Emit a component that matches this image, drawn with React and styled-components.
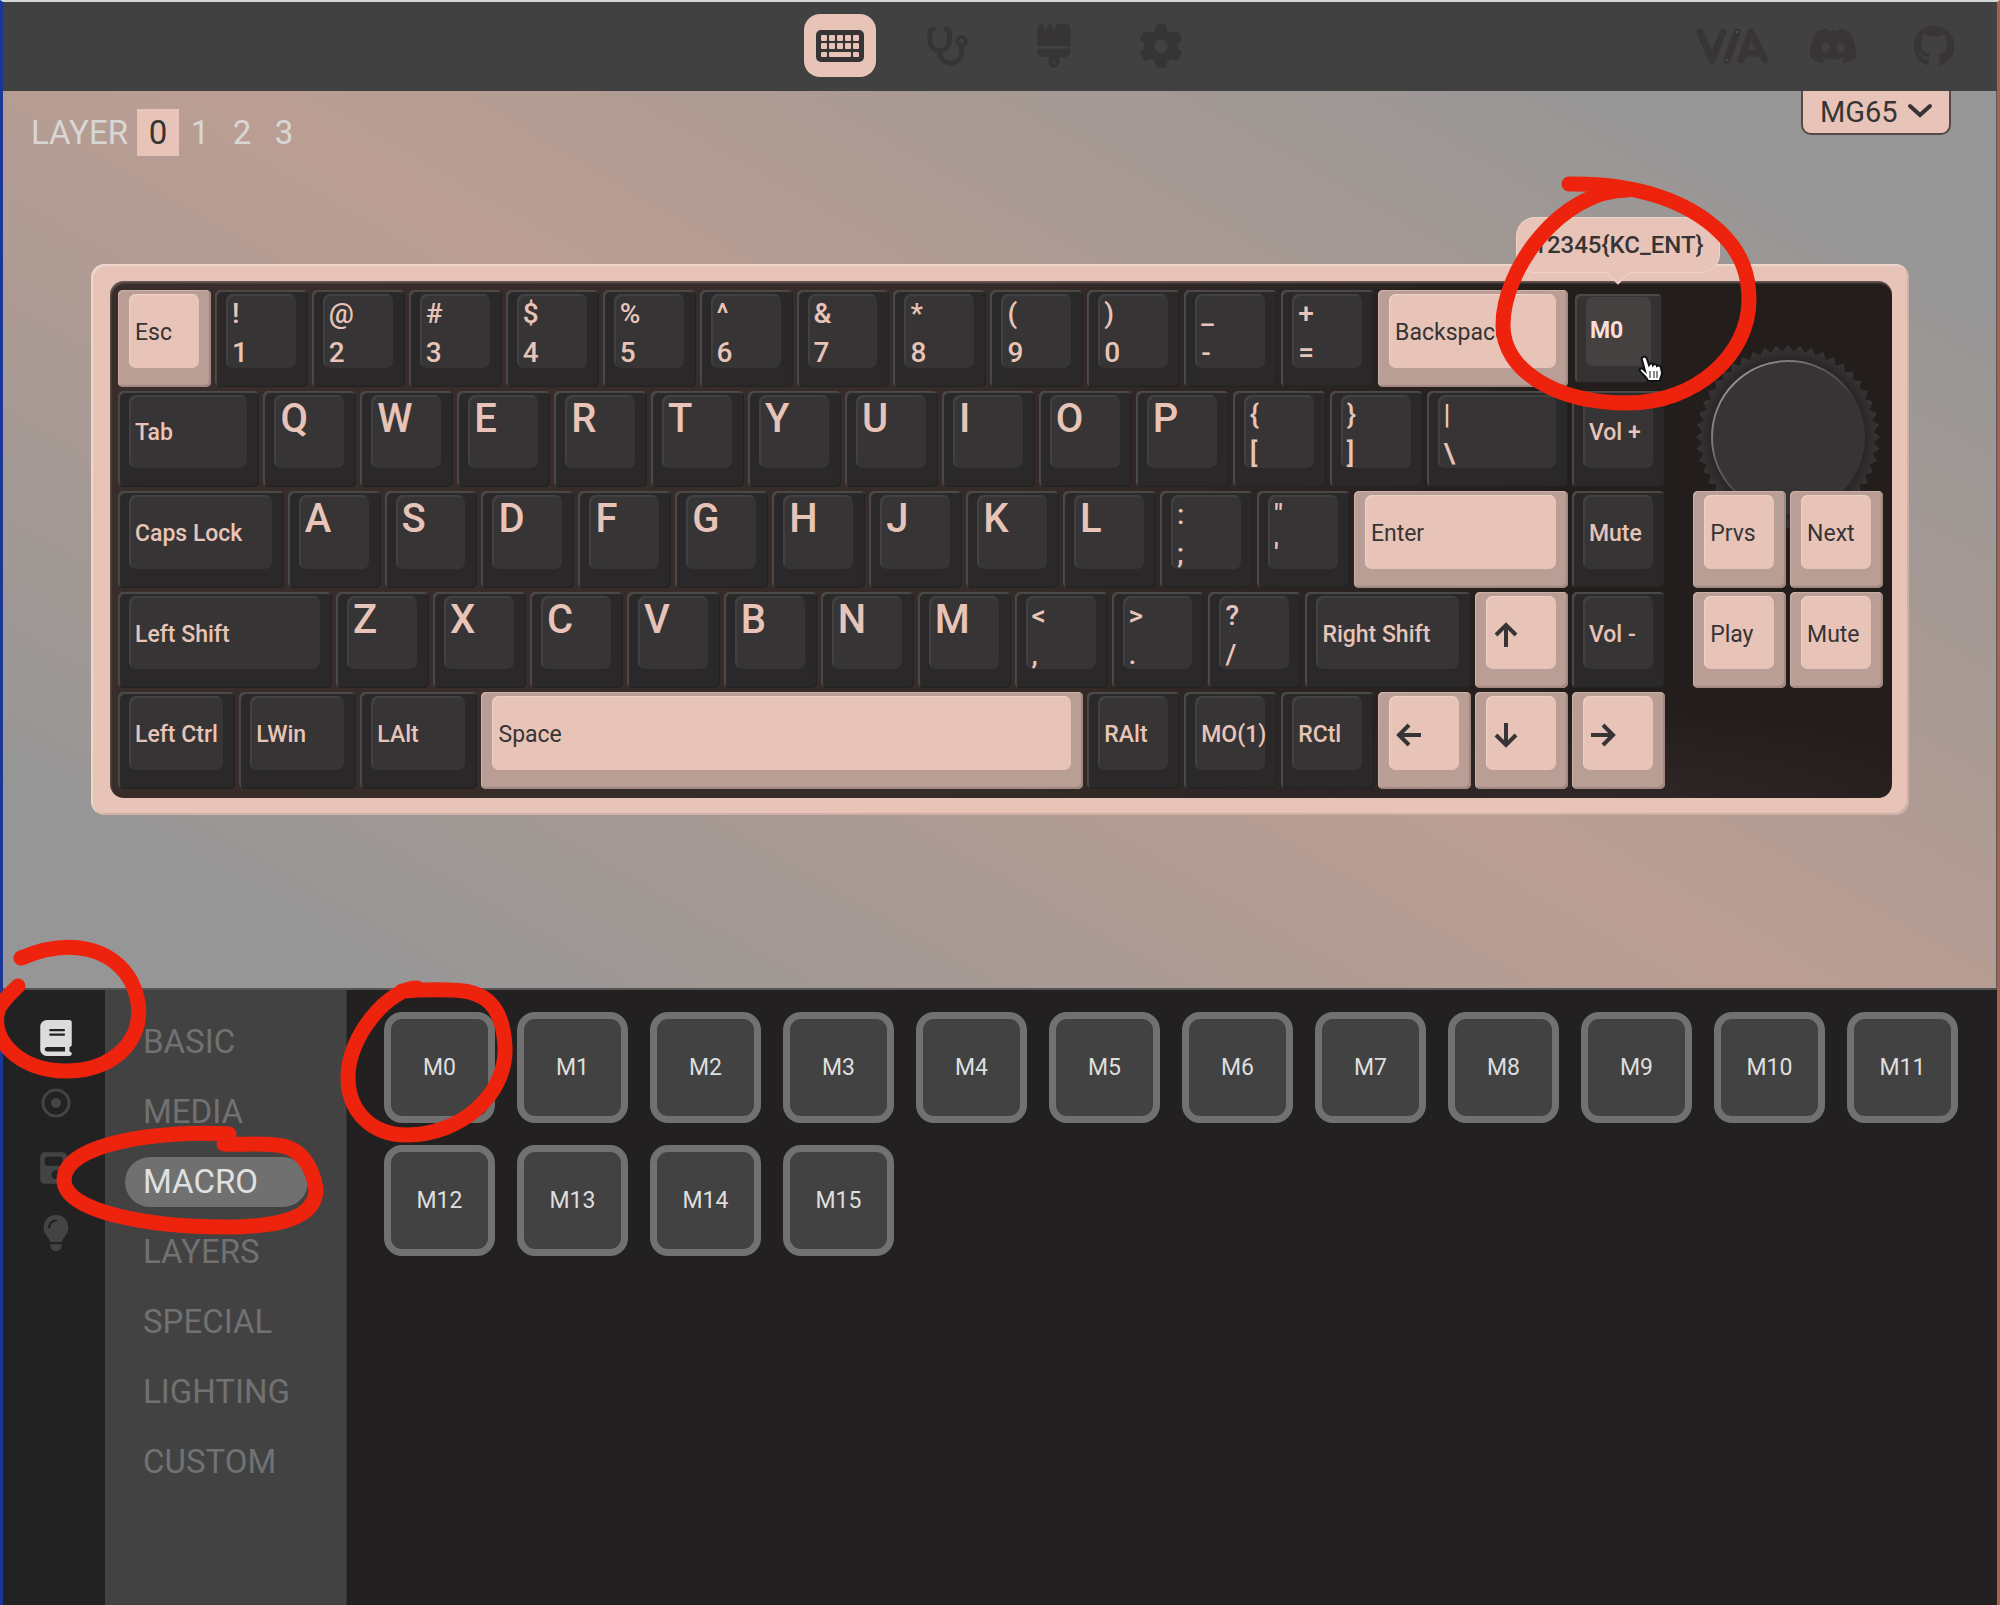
import React, { useState } from 'react';
import styled, { createGlobalStyle, css } from 'styled-components';
import {
  FaStethoscope,
  FaBrush,
  FaGear,
  FaDiscord,
  FaGithub,
  FaBook,
  FaFloppyDisk,
  FaLightbulb,
} from 'react-icons/fa6';

const accent = '#e8c4b8';
const accentSide = '#b99e95';
const ink = '#363434';

const layers = [0, 1, 2, 3];
const menu = ['BASIC', 'MEDIA', 'MACRO', 'LAYERS', 'SPECIAL', 'LIGHTING', 'CUSTOM'];
const macros = Array.from({ length: 16 }, (_, i) => `M${i}`);

// [legend, width in quarter units, tone]; two legends are stacked
const rows = [
  [
    ['Esc', 4, 'accent'],
    ...['!1', '@2', '#3', '$4', '%5', '^6', '&7', '*8', '(9', ')0', '_-', '+='].map((k) => [k.split(''), 4]),
    ['Backspace', 8, 'accent'],
    ['M0', 4, 'hover'],
  ],
  [
    ['Tab', 6],
    ...'QWERTYUIOP'.split('').map((k) => [k, 4]),
    [['{', '['], 4],
    [['}', ']'], 4],
    [['|', '\\'], 6],
    ['Vol +', 4],
  ],
  [
    ['Caps Lock', 7],
    ...'ASDFGHJKL'.split('').map((k) => [k, 4]),
    [[':', ';'], 4],
    [['"', "'"], 4],
    ['Enter', 9, 'accent'],
    ['Mute', 4],
    [null, 1],
    ['Prvs', 4, 'accent'],
    ['Next', 4, 'accent'],
  ],
  [
    ['Left Shift', 9],
    ...'ZXCVBNM'.split('').map((k) => [k, 4]),
    [['<', ','], 4],
    [['>', '.'], 4],
    [['?', '/'], 4],
    ['Right Shift', 7],
    ['up', 4, 'accent'],
    ['Vol -', 4],
    [null, 1],
    ['Play', 4, 'accent'],
    ['Mute', 4, 'accent'],
  ],
  [
    ['Left Ctrl', 5],
    ['LWin', 5],
    ['LAlt', 5],
    ['Space', 25, 'accent'],
    ['RAlt', 4],
    ['MO(1)', 4],
    ['RCtl', 4],
    ['left', 4, 'accent'],
    ['down', 4, 'accent'],
    ['right', 4, 'accent'],
  ],
];

const keys = rows.flatMap((row, r) => {
  let x = 1;
  return row
    .map(([legend, w, tone]) => {
      const key = { legend, w, tone, x, row: r + 1 };
      x += w;
      return key;
    })
    .filter((key) => key.legend !== null);
});

const turns = { up: 0, right: 90, down: 180, left: 270 };

const Arrow = ({ name }) => (
  <svg width='28' height='26' viewBox='0 0 28 26' role='img' aria-label={name}>
    <g transform={`rotate(${turns[name]} 14 13)`} fill='none' stroke={ink} strokeWidth='4'>
      <path d='M14 25V3M4 13L14 3l10 10' />
    </g>
  </svg>
);

const teeth = Array.from({ length: 96 }, (_, i) => {
  const r = i % 2 ? 86 : 92;
  const a = (i / 96) * Math.PI * 2;
  return `${(93 + r * Math.cos(a)).toFixed(1)},${(93 + r * Math.sin(a)).toFixed(1)}`;
}).join(' ');

const KnobDrawing = () => (
  <svg width='186' height='186' viewBox='0 0 186 186' aria-hidden='true'>
    <defs>
      <linearGradient id='rim' x1='0' y1='0' x2='1' y2='1'>
        <stop offset='0.1' stopColor='#9b9999' />
        <stop offset='0.6' stopColor='#363434' />
      </linearGradient>
      <radialGradient id='skirt'>
        <stop offset='0.82' stopColor='#262425' />
        <stop offset='0.98' stopColor='#363434' />
      </radialGradient>
    </defs>
    <polygon points={teeth} fill='url(#skirt)' />
    <circle cx='93' cy='93' r='76' fill='#363435' stroke='url(#rim)' strokeWidth='2' />
  </svg>
);

const KeyboardIcon = () => (
  <svg width='48' height='32' viewBox='0 0 48 32' aria-hidden='true'>
    <rect width='48' height='32' rx='5' fill='#373435' />
    <g fill={accent}>
      {[5, 13, 21, 29, 37].map((x) => (
        <React.Fragment key={x}>
          <rect x={x} y='5' width='6' height='6' rx='1' />
          <rect x={x} y='13' width='6' height='6' rx='1' />
        </React.Fragment>
      ))}
      <rect x='5' y='22' width='6' height='5' rx='1' />
      <rect x='13' y='22' width='22' height='5' rx='1' />
      <rect x='37' y='22' width='6' height='5' rx='1' />
    </g>
  </svg>
);

const ViaLogo = () => (
  <svg width='74' height='40' viewBox='0 0 74 40' aria-hidden='true'>
    <g fill='none' stroke='currentColor' strokeWidth='7' strokeLinecap='round' strokeLinejoin='round'>
      <path d='M5 6L17 34L28 6' />
      <path d='M42 6L32 34' />
      <path d='M46 34L56 6L70 34M51 27H65' />
    </g>
    <circle cx='42' cy='6' r='1' fill='#5a5657' />
    <circle cx='32' cy='34' r='1' fill='#5a5657' />
  </svg>
);

const RecordIcon = () => (
  <svg width='30' height='30' viewBox='0 0 30 30' aria-hidden='true'>
    <circle cx='15' cy='15' r='13' fill='none' stroke='currentColor' strokeWidth='3' />
    <circle cx='15' cy='15' r='5' fill='currentColor' />
  </svg>
);

const Hand = () => (
  <HandSvg width='28' height='30' viewBox='0 0 28 30' aria-hidden='true'>
    <path
      d='M6 3c2-1 3 0 4 2l2 6c1-2 4-2 4 0 1-1 4-1 4 1 2-1 4 0 4 2l1 5c0 3-2 4-2 8H11c0-3-6-7-8-10-1-2 1-4 4-1l1 1L5 6C4 5 5 4 6 3z'
      fill='#fff'
      stroke='#111'
      strokeWidth='2'
    />
    <path d='M13 17v7M17 17v7M20 17v7' stroke='#111' strokeWidth='1' />
  </HandSvg>
);

export default function App() {
  const [layer, setLayer] = useState(0);
  const [category, setCategory] = useState('MACRO');

  return (
    <Page>
      <GlobalStyle />
      <Header>
        <Nav>
          <NavButton $active aria-label='Configure'>
            <KeyboardIcon />
          </NavButton>
          <NavButton aria-label='Key tester'>
            <FaStethoscope size={44} />
          </NavButton>
          <NavButton aria-label='Design'>
            <FaBrush size={44} />
          </NavButton>
          <NavButton aria-label='Settings'>
            <FaGear size={44} />
          </NavButton>
        </Nav>
        <Links>
          <ExternalLink href='#via' aria-label='VIA'>
            <ViaLogo />
          </ExternalLink>
          <ExternalLink href='#discord' aria-label='Discord'>
            <FaDiscord size={50} />
          </ExternalLink>
          <ExternalLink href='#github' aria-label='GitHub'>
            <FaGithub size={42} />
          </ExternalLink>
        </Links>
      </Header>

      <Canvas>
        <TopBar>
          <Layers>
            <LayerLabel>LAYER</LayerLabel>
            {layers.map((n) => (
              <LayerButton key={n} $active={n === layer} onClick={() => setLayer(n)}>
                {n}
              </LayerButton>
            ))}
          </Layers>
          <Device>
            <DeviceSelect aria-label='Keyboard'>
              <option>MG65</option>
            </DeviceSelect>
            <Chevron width='26' height='16' viewBox='0 0 26 16' aria-hidden='true'>
              <path d='M3 3l10 9 10-9' fill='none' stroke={ink} strokeWidth='4' strokeLinecap='round' />
            </Chevron>
          </Device>
        </TopBar>
        <Case>
          <Plate>
            <Knob>
              <KnobDrawing />
            </Knob>
            {keys.map(({ legend, w, tone, x, row }) => (
              <Key key={`${row}-${x}`} $x={x} $w={w} $row={row} $tone={tone}>
                <Cap $tone={tone} $size={legend.length === 1 ? 'letter' : Array.isArray(legend) ? 'pair' : 'word'}>
                  {Array.isArray(legend) && legend.map((part) => <span key={part}>{part}</span>)}
                  {!Array.isArray(legend) && (legend in turns ? <Arrow name={legend} /> : legend)}
                </Cap>
                {tone === 'hover' && (
                  <>
                    <Tooltip role='tooltip'>{'12345{KC_ENT}'}</Tooltip>
                    <Hand />
                  </>
                )}
              </Key>
            ))}
          </Plate>
        </Case>
      </Canvas>

      <Panel>
        <Rail>
          <RailButton $active aria-label='Keymap'>
            <FaBook size={36} />
          </RailButton>
          <RailButton aria-label='Macros'>
            <RecordIcon />
          </RailButton>
          <RailButton aria-label='Save and load'>
            <FaFloppyDisk size={36} />
          </RailButton>
          <RailButton aria-label='Lighting'>
            <FaLightbulb size={36} />
          </RailButton>
        </Rail>
        <Menu>
          {menu.map((item) => (
            <MenuButton key={item} $active={item === category} onClick={() => setCategory(item)}>
              {item}
            </MenuButton>
          ))}
        </Menu>
        <Keycodes>
          {macros.map((name) => (
            <Keycode key={name}>{name}</Keycode>
          ))}
        </Keycodes>
      </Panel>

      <Marks width='2000' height='1605' viewBox='0 0 2000 1605' aria-hidden='true'>
        <path d='M1569 184C1640 183 1690 203 1720 232C1742 253 1749 275 1749 300C1749 355 1695 403 1628 403C1555 403 1503 370 1503 325C1503 270 1560 190 1628 190' />
        <path d='M21 958C70 937 112 948 131 981C155 1030 120 1071 67 1071C15 1071 -12 1035 -1 1008C3 1000 12 992 18 986' />
        <path d='M229 1134C160 1130 64 1143 64 1180C64 1212 150 1227 225 1227C280 1227 316 1218 316 1189C312 1165 300 1146 275 1145C255 1143 240 1145 224 1144' />
        <path d='M417 988C390 988 348 1035 348 1077C348 1112 372 1135 407 1135C460 1135 507 1095 505 1047C503 1005 485 990 450 990C430 989 415 990 402 991' />
      </Marks>
    </Page>
  );
}

const GlobalStyle = createGlobalStyle`
  * {
    box-sizing: border-box;
  }
  body {
    margin: 0;
    background: #222021;
  }
  button, select {
    font-family: inherit;
    border: none;
    padding: 0;
    cursor: pointer;
  }
`;

const Page = styled.div`
  position: relative;
  display: flex;
  flex-direction: column;
  min-height: 100vh;
  overflow: clip;
  overflow-clip-margin: border-box;
  border-top: 2px solid #d5d8d7;
  border-left: 3px solid #1b3796;
  border-right: 3px solid #a8604f;
  font-family: Roboto, 'Liberation Sans', sans-serif;
`;

const Header = styled.header`
  display: grid;
  grid-template-columns: 1fr auto 1fr;
  align-items: center;
  height: 89px;
  padding: 0 26px 2px;
  background: #414141;
`;

const Nav = styled.nav`
  grid-column: 2;
  display: flex;
  gap: 35px;
`;

const NavButton = styled.button`
  display: flex;
  align-items: center;
  justify-content: center;
  width: 72px;
  height: 63px;
  border-radius: 16px;
  color: #373435;
  background: ${(props) => (props.$active ? accent : 'transparent')};
`;

const Links = styled.div`
  display: flex;
  justify-content: flex-end;
  gap: 27px;
`;

const ExternalLink = styled.a`
  display: flex;
  align-items: center;
  justify-content: center;
  width: 74px;
  height: 63px;
  color: #393536;
`;

const Canvas = styled.main`
  padding-bottom: 173px;
  border-right: 1px solid #5b5758;
  background: linear-gradient(30deg, #969696 10%, #bb9e93 50%, #969696 90%);
`;

const TopBar = styled.div`
  display: flex;
  align-items: flex-start;
  justify-content: space-between;
  height: 173px;
  padding: 0 45px 0 28px;
`;

const Layers = styled.div`
  display: flex;
  align-items: center;
  margin-top: 18px;
  line-height: 47px;
  color: #d9d7d6;
`;

const LayerLabel = styled.span`
  width: 106px;
  font-size: 33px;
`;

const LayerButton = styled.button`
  width: 42px;
  height: 47px;
  font-size: 33px;
  line-height: 47px;
  color: ${(props) => (props.$active ? ink : '#d9d7d6')};
  background: ${(props) => (props.$active ? accent : 'transparent')};
`;

const Device = styled.div`
  position: relative;
`;

const DeviceSelect = styled.select`
  appearance: none;
  width: 150px;
  height: 44px;
  padding: 0 17px;
  border: 2px solid #55494a;
  border-top: none;
  border-radius: 0 0 10px 10px;
  background: ${accent};
  color: ${ink};
  font-size: 29px;
`;

const Chevron = styled.svg`
  position: absolute;
  top: 12px;
  right: 18px;
  pointer-events: none;
`;

const Case = styled.div`
  margin: 0 87px 0 88px;
  padding: 17px 17px 17px 19px;
  border-radius: 14px;
  background: ${accent};
  box-shadow: inset 2px 2px 1px #f0d6cd, inset -2px -2px 1px #cfb0a5;
`;

const Plate = styled.div`
  display: grid;
  grid-template-columns: repeat(73, minmax(0, 1fr));
  grid-template-rows: repeat(5, minmax(0, 1fr));
  height: 517px;
  padding: 7px 7px 7px 6px;
  border-radius: 14px;
  background:
    radial-gradient(ellipse 420px 110px at 82% 104%, #33292a, transparent),
    linear-gradient(90deg, #382d2a, #352b29 50%, #231e1c 82%);
  box-shadow: inset 1px 2px 2px #6a5a56;
`;

const Knob = styled.div`
  grid-area: 1 / 66 / span 3 / span 8;
  display: flex;
  align-items: center;
  justify-content: center;
  padding-bottom: 4px;
`;

const Key = styled.button`
  position: relative;
  grid-column: ${(props) => props.$x} / span ${(props) => props.$w};
  grid-row: ${(props) => props.$row};
  display: flex;
  min-width: 0;
  min-height: 0;
  margin: 2px;
  padding: 4px 12px 19px 11px;
  border-radius: 5px;
  background: #2a2829;
  box-shadow: inset 2px 2px 1px #4d4a4a, inset -1px -1px 1px #232122;

  ${(props) =>
    props.$tone === 'accent' &&
    css`
      background: ${accentSide};
      box-shadow: inset 1px 1px 1px #cfb1a7, inset -2px -2px 1px #a1877f;
    `}

  ${(props) =>
    props.$tone === 'hover' &&
    css`
      margin: 6px 5px 6px 5px;
      padding: 3px 11px 17px 11px;
      background: #343233;
    `}
`;

const sizes = {
  word: css`
    justify-content: center;
    padding-top: 4px;
    font-size: 23px;
    line-height: 28px;
  `,
  letter: css`
    padding-top: 4px;
    font-size: 40px;
    line-height: 40px;
  `,
  pair: css`
    font-size: 28px;
    line-height: 39px;
  `,
};

const Cap = styled.span`
  display: flex;
  flex-direction: column;
  flex: 1;
  min-width: 0;
  height: 100%;
  padding-left: 6px;
  border-radius: 7px;
  text-align: left;
  white-space: nowrap;
  font-weight: 500;
  color: ${accent};
  background: #363435;
  box-shadow: inset 2px 2px 1px #434142;
  ${(props) => sizes[props.$size]}

  ${(props) =>
    props.$tone === 'accent' &&
    css`
      color: ${ink};
      font-weight: 400;
      background: ${accent};
      box-shadow: inset 1px 1px 1px #f0d2c7;
    `}

  ${(props) =>
    props.$tone === 'hover' &&
    css`
      color: #f8dfd6;
      font-weight: 700;
      background: #454141;
      padding: 0 0 0 4px;
    `}
`;

const Tooltip = styled.span`
  position: absolute;
  bottom: calc(100% + 22px);
  left: 50%;
  width: 202px;
  transform: translateX(-50%);
  border-radius: 18px;
  background: ${accent};
  box-shadow: 0 0 0 1px #f0d2c7;
  color: ${ink};
  font-size: 24px;
  font-weight: 500;
  line-height: 54px;

  &::after {
    content: '';
    position: absolute;
    top: 100%;
    left: 50%;
    margin: -8px 0 0 -8px;
    width: 16px;
    height: 16px;
    transform: rotate(45deg);
    background: ${accent};
    box-shadow: 1px 1px 0 #f0d2c7;
  }
`;

const HandSvg = styled.svg`
  position: absolute;
  right: -3px;
  bottom: -1px;
`;

const Panel = styled.section`
  display: flex;
  flex: 1;
  border-top: 2px solid #555;
`;

const Rail = styled.nav`
  display: flex;
  flex-direction: column;
  align-items: center;
  gap: 14px;
  width: 102px;
  padding: 22px 0 0 3px;
  background: #222;
`;

const RailButton = styled.button`
  display: flex;
  align-items: center;
  justify-content: center;
  width: 52px;
  height: 51px;
  background: none;
  color: ${(props) => (props.$active ? '#dcdcdc' : '#444')};
`;

const Menu = styled.nav`
  display: flex;
  flex-direction: column;
  gap: 20px;
  width: 242px;
  padding: 27px 38px 27px 20px;
  border-right: 1px solid #333;
  background: #424242;
`;

const MenuButton = styled.button`
  height: 50px;
  padding-left: 18px;
  border-radius: 25px;
  text-align: left;
  font-size: 33px;
  line-height: 50px;
  color: ${(props) => (props.$active ? '#e0e0e0' : '#717171')};
  background: ${(props) => (props.$active ? '#707070' : 'transparent')};
`;

const Keycodes = styled.div`
  display: flex;
  flex: 1;
  flex-wrap: wrap;
  align-content: flex-start;
  gap: 22px;
  padding: 22px 37px;
  background: #222021;
`;

const Keycode = styled.button`
  width: 111px;
  height: 111px;
  border: 7px solid #717171;
  border-radius: 18px;
  background: #424242;
  color: #dedede;
  font-size: 23px;
`;

const Marks = styled.svg`
  position: absolute;
  top: -2px;
  left: -3px;
  pointer-events: none;
  fill: none;
  stroke: #ee230d;
  stroke-width: 15px;
  stroke-linecap: round;
  stroke-linejoin: round;
`;
